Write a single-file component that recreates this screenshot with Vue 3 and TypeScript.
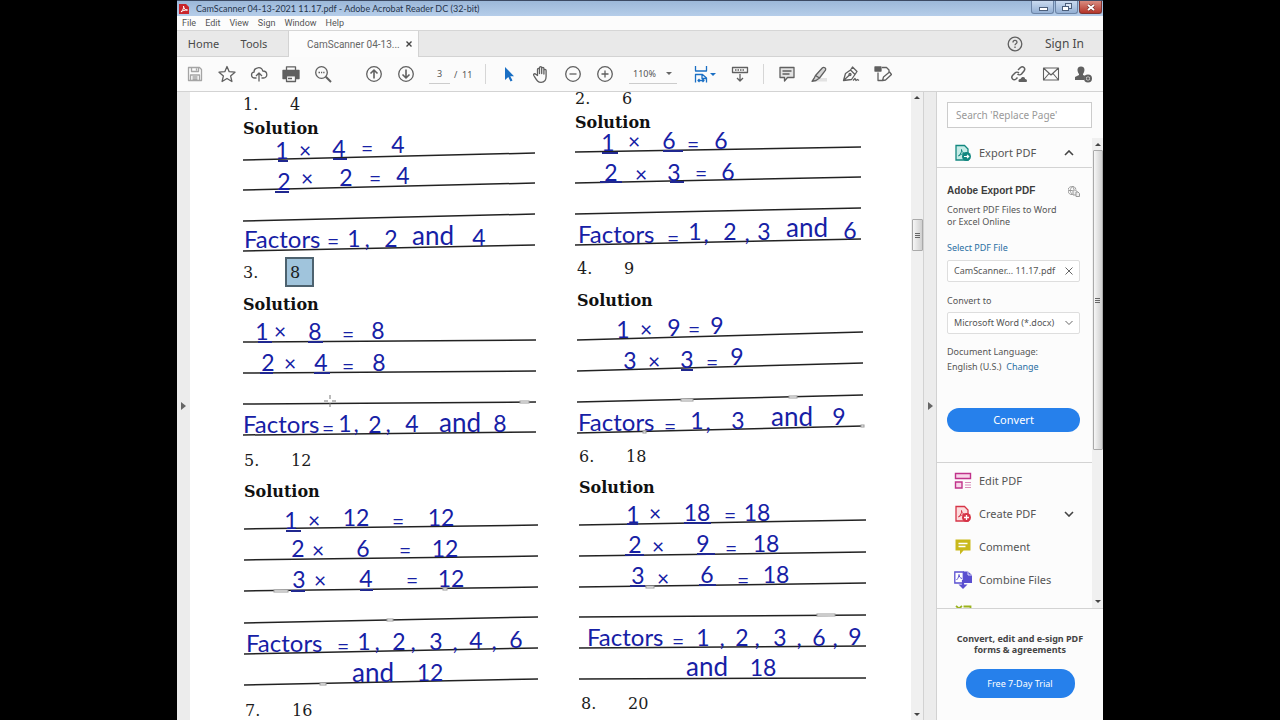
<script setup lang="ts">
import { ref } from 'vue'

type Kind = 'num' | 'op' | 'word' | 'and'
interface Ink { x: number; y: number; text: string; kind: Kind }
interface Problem {
  no: number
  value: string
  marked?: boolean
  box: [number, number, number, number]
  rules: [number, number][]
  under: [number, number, number][]
  gaps: [number, number, number][]
  ink: Ink[]
}

const n = (x: number, y: number, text: string): Ink => ({ x, y, text, kind: text === 'and' ? 'and' : 'num' })
const o = (x: number, y: number, text: string): Ink => ({ x, y: y + 6, text, kind: 'op' })
const w = (x: number, y: number, text: string): Ink => ({ x, y, text, kind: 'word' })

const left: Problem[] = [
  {
    no: 1, value: '4', box: [243, 141, 292, 120],
    rules: [[160, 153], [190, 183], [221, 214], [251, 245]],
    under: [[278, 288, 161], [333, 347, 159], [275, 289, 192]], gaps: [],
    ink: [
      n(282, 159, '1'), o(305, 152, '×'), n(339, 157, '4'), o(367, 150, '='), n(398, 153, '4'),
      n(284, 190, '2'), o(307, 180, '×'), n(346, 186, '2'), o(375, 180, '='), n(403, 184, '4'),
      w(244, 248, 'Factors'), o(333, 243, '='), n(354, 247, '1'), n(367, 247, ','), n(391, 247, '2'), n(433, 245, 'and'), n(479, 246, '4'),
    ],
  },
  {
    no: 3, value: '8', marked: true, box: [243, 318, 293, 132],
    rules: [[343, 341], [374, 372], [405, 403], [436, 433]],
    under: [[258, 272, 343], [308, 323, 343], [260, 273, 374], [314, 330, 374]], gaps: [[520, 9, 403]],
    ink: [
      n(262, 341, '1'), o(280, 334, '×'), n(315, 341, '8'), o(348, 337, '='), n(378, 340, '8'),
      n(268, 372, '2'), o(290, 366, '×'), n(321, 372, '4'), o(348, 369, '='), n(379, 372, '8'),
      w(243, 434, 'Factors'), o(328, 431, '='), n(345, 433, '1'), n(356, 433, ','), n(375, 434, '2'), n(388, 433, ','), n(412, 433, '4'), n(460, 433, 'and'), n(500, 433, '8'),
    ],
  },
  {
    no: 5, value: '12', box: [244, 505, 294, 195],
    rules: [[530, 526], [561, 557], [592, 588], [624, 618], [655, 649], [686, 680]],
    under: [[286, 301, 532], [291, 305, 592], [360, 373, 591]], gaps: [[274, 14, 592], [387, 6, 621], [443, 4, 590], [320, 6, 685]],
    ink: [
      n(291, 530, '1'), o(314, 523, '×'), n(356, 527, '12'), o(398, 524, '='), n(441, 527, '12'),
      n(298, 558, '2'), o(318, 553, '×'), n(363, 558, '6'), o(405, 553, '='), n(445, 558, '12'),
      n(299, 589, '3'), o(320, 583, '×'), n(366, 588, '4'), o(412, 583, '='), n(451, 588, '12'),
      w(246, 653, 'Factors'), o(343, 649, '='), n(364, 651, '1'), n(377, 651, ','), n(399, 651, '2'), n(413, 651, ','), n(436, 651, '3'), n(455, 651, ','), n(476, 650, '4'), n(494, 650, ','), n(516, 649, '6'),
      n(373, 683, 'and'), n(430, 682, '12'),
    ],
  },
  { no: 7, value: '16', box: [245, 720, 292, 0], rules: [], under: [], gaps: [], ink: [] },
]

const right: Problem[] = [
  {
    no: 2, value: '6', box: [575, 135, 286, 122],
    rules: [[152, 147], [183, 177], [214, 208], [245, 239]],
    under: [[602, 618, 153], [663, 683, 151], [600, 622, 182], [670, 684, 182]], gaps: [],
    ink: [
      n(608, 151, '1'), o(634, 143, '×'), n(669, 149, '6'), o(693, 146, '='), n(721, 149, '6'),
      n(611, 181, '2'), o(641, 176, '×'), n(674, 181, '3'), o(701, 175, '='), n(728, 180, '6'),
      w(578, 243, 'Factors'), o(673, 240, '='), n(695, 240, '1'), n(706, 242, ','), n(730, 240, '2'), n(747, 241, ','), n(764, 240, '3'), n(807, 237, 'and'), n(850, 239, '6'),
    ],
  },
  {
    no: 4, value: '9', box: [577, 313, 286, 132],
    rules: [[340, 332], [371, 363], [402, 395], [433, 426]],
    under: [[681, 693, 370]], gaps: [[681, 12, 400], [789, 8, 397], [643, 3, 432], [861, 3, 426]],
    ink: [
      n(623, 338, '1'), o(646, 331, '×'), n(674, 336, '9'), o(694, 331, '='), n(717, 334, '9'),
      n(630, 369, '3'), o(654, 363, '×'), n(687, 368, '3'), o(712, 364, '='), n(737, 365, '9'),
      w(578, 431, 'Factors'), o(670, 428, '='), n(697, 429, '1'), n(708, 430, ','), n(738, 429, '3'), n(792, 426, 'and'), n(839, 425, '9'),
    ],
  },
  {
    no: 6, value: '18', box: [579, 500, 287, 192],
    rules: [[525, 520], [556, 552], [587, 583], [617, 615], [648, 646], [679, 678]],
    under: [[627, 638, 524], [684, 711, 523], [625, 644, 555], [697, 715, 554], [630, 645, 586], [699, 716, 585]],
    gaps: [[646, 8, 587], [817, 18, 615]],
    ink: [
      n(633, 523, '1'), o(655, 515, '×'), n(697, 521, '18'), o(730, 517, '='), n(757, 521, '18'),
      n(635, 553, '2'), o(658, 548, '×'), n(703, 552, '9'), o(731, 550, '='), n(766, 552, '18'),
      n(638, 584, '3'), o(663, 580, '×'), n(707, 583, '6'), o(743, 582, '='), n(776, 583, '18'),
      w(587, 646, 'Factors'), o(678, 643, '='), n(703, 646, '1'), n(722, 646, ','), n(742, 646, '2'), n(757, 646, ','), n(780, 646, '3'), n(799, 646, ','), n(819, 646, '6'), n(835, 646, ','), n(855, 645, '9'),
      n(707, 676, 'and'), n(763, 676, '18'),
    ],
  },
  { no: 8, value: '20', box: [581, 720, 292, 0], rules: [], under: [], gaps: [], ink: [] },
]
const columns = [left, right]

const menus = ['File', 'Edit', 'View', 'Sign', 'Window', 'Help']
const page = ref('3')
const zoom = ref('110%')
const search = ref('')
const format = ref('Microsoft Word (*.docx)')
</script>

<template>
  <div class="stage">
    <main class="window">
      <header class="titlebar">
        <svg class="applogo" viewBox="0 0 10 10" aria-hidden="true">
          <path d="M0 0h7l3 3v7H0z" fill="#c9252b" /><path d="M2 8C4 6 5 4 4.500 2M4.500 2C5 5 6 6 8.500 6M2 8C3.500 6.500 6 6 8.500 6" fill="none" stroke="#fff" />
        </svg>
        <h1>CamScanner 04-13-2021 11.17.pdf - Adobe Acrobat Reader DC (32-bit)</h1>
        <div class="winbtns">
          <button aria-label="Minimize"><svg viewBox="0 0 22 11"><rect x="7.500" y="5.500" width="8" height="3" fill="#fff" stroke="#4c5f7b" /></svg></button>
          <button aria-label="Restore"><svg viewBox="0 0 22 11"><rect x="9.500" y="1.500" width="6" height="5" fill="#dce7f5" stroke="#4c5f7b" /><rect x="6.500" y="4.500" width="6" height="4" fill="#fff" stroke="#4c5f7b" /></svg></button>
          <button class="close" aria-label="Close"><svg viewBox="0 0 22 11"><path d="M8 3l6 5M14 3l-6 5" stroke="#6b2a25" stroke-width="3" /><path d="M8 3l6 5M14 3l-6 5" stroke="#fff" stroke-width="2" /></svg></button>
        </div>
      </header>

      <nav class="menubar"><button v-for="m in menus" :key="m">{{ m }}</button></nav>

      <div class="tabs">
        <button class="home">Home</button>
        <button class="tools">Tools</button>
        <div class="doc-tab"><span>CamScanner 04-13...</span><button aria-label="Close tab"><svg viewBox="0 0 6 6"><path d="M.5.5l5 5M5.500.5l-5 5" stroke="#444" stroke-width="1.400" /></svg></button></div>
        <button class="help" aria-label="Help"><svg class="ic" viewBox="0 0 18 18"><circle cx="9" cy="9" r="6.800" /><path d="M7 7.500c0-2.800 4-2.600 4-.2 0 1.500-2 1.500-2 3M9 11.500v1.400" /></svg></button>
        <button class="signin">Sign In</button>
      </div>

      <div class="toolbar">
        <button class="tb faint" aria-label="Save"><svg class="ic" viewBox="0 0 18 18"><path d="M2.500 2.500h11l2 2v11h-13zM5.500 2.500v4h7v-4M10.500 3.500v2M4.500 15.500v-5.500h9v5.500M6.500 12h5M6.500 14h5" /></svg></button>
        <button class="tb" aria-label="Star"><svg class="ic" viewBox="0 0 18 18"><path d="M9 1.500l2.200 5.200 5.800.5-4.400 3.700 1.300 5.600L9 13.500l-4.900 3 1.300-5.600L1 7.200l5.800-.5z" /></svg></button>
        <button class="tb" aria-label="Upload"><svg class="ic" viewBox="0 0 18 18"><path d="M6.500 13H4.800C.6 13 .6 7.500 4 7.200 4 2 11.500 1 12.800 6 18 6 18 13 13.500 13h-2M9 16.500v-8M6 11l3-3 3 3" /></svg></button>
        <button class="tb" aria-label="Print"><svg class="ic" viewBox="0 0 18 18"><path d="M4.500 5V1.800h9V5" /><path d="M1 5.500h16v8h-3v-3H4v3H1z" fill="#606060" /><path d="M4.500 10.500h9v6h-9zM6 13.500h4" /></svg></button>
        <button class="tb" aria-label="Search"><svg class="ic" viewBox="0 0 18 18"><circle cx="7.500" cy="7.500" r="5.800" /><path d="M11.800 11.800L17 17" stroke-width="2" /><path d="M4.500 7.500H6M7 7.500h1.200M9.200 7.500h1.300" /></svg></button>
        <button class="tb after" aria-label="Previous page"><svg class="ic" viewBox="0 0 18 18"><circle cx="9" cy="9" r="7.300" /><path d="M9 13.500V5M5.500 8.500L9 5l3.500 3.500" stroke-width="1.600" /></svg></button>
        <button class="tb" aria-label="Next page"><svg class="ic" viewBox="0 0 18 18"><circle cx="9" cy="9" r="7.300" /><path d="M9 4.500V13M5.500 9.500L9 13l3.500-3.500" stroke-width="1.600" /></svg></button>
        <input v-model="page" class="page" aria-label="Page number" /><span class="total">/&nbsp; 11</span>
        <i class="sep"></i>
        <button class="tb" aria-label="Select"><svg class="ic" viewBox="0 0 18 18"><path d="M5 2v13l3.300-3 2.200 4.500 2-1-2.200-4.300H14z" fill="#1a6fc4" stroke="none" /></svg></button>
        <button class="tb" aria-label="Hand"><svg class="ic" viewBox="0 0 18 18"><path d="M5.500 10.500V4.500c0-1.500 2-1.500 2 0V8.500 2.800c0-1.500 2.200-1.500 2.200 0v5.700-5c0-1.500 2.200-1.500 2.200 0v5.500-3.500c0-1.500 2.200-1.500 2.200 0v6c0 4-2 5.800-5 5.800-3.500 0-4.500-2.300-7.300-6.800-.8-1.500 1-2.300 2-1.200z" /></svg></button>
        <button class="tb" aria-label="Zoom out"><svg class="ic" viewBox="0 0 18 18"><circle cx="9" cy="9" r="7.300" /><path d="M5.500 9h7" /></svg></button>
        <button class="tb" aria-label="Zoom in"><svg class="ic" viewBox="0 0 18 18"><circle cx="9" cy="9" r="7.300" /><path d="M5.500 9h7M9 5.500v7" /></svg></button>
        <label class="zoom"><select v-model="zoom" aria-label="Zoom level"><option>110%</option></select><i class="caret"></i></label>
        <button class="tb fit" aria-label="Fit width"><svg class="ic" viewBox="0 0 18 18"><path d="M3.500 1v5h11V1M3.500 17.500V9.500h7l4 3.500v4.500M10 9.500v4h4.500M6 15.500h6M7.500 14L6 15.500 7.500 17M10.500 14l1.500 1.500-1.500 1.500" /></svg><i class="caret"></i></button>
        <button class="tb" aria-label="Read mode"><svg class="ic" viewBox="0 0 18 18"><path d="M1.500 2.500h15v5h-15z" /><path d="M4 5h10" stroke-dasharray="1.500 1" /><path d="M9 9v7M6 13l3 3 3-3" /></svg></button>
        <i class="sep"></i>
        <button class="tb" aria-label="Comment"><svg class="ic" viewBox="0 0 18 18"><path d="M2 2.500h14v10h-6.500L6.500 16v-3.500H2z" fill="#e3e3e3" /><path d="M4.500 6h9M4.500 9h7" /></svg></button>
        <button class="tb" aria-label="Highlight"><svg class="ic" viewBox="0 0 18 18"><path d="M8 13h9v3.500H4z" fill="#e2e2e2" stroke="none" /><path d="M5.500 10.500L12.500 2.800c1.500-1.300 4 .6 3 2.400L9.500 13zM5.500 10.500L4 13.500l-2 2.800 4-.8 3.500-2.500" fill="#d5d5d5" /></svg></button>
        <button class="tb" aria-label="Sign"><svg class="ic" viewBox="0 0 18 18"><path d="M1.500 15.500l2-7 5-3.500 4.500 4.500-3.500 5zM1.500 15.500L7.500 10M8.500 5l2-3 4.500 4.500-2 3M11 15.500l2-2 1 2 1.500-1 1.500 1" /><circle cx="8" cy="9.500" r="1" /></svg></button>
        <button class="tb" aria-label="Stamp"><svg class="ic" viewBox="0 0 18 18"><path d="M1 2h6v4H1z" fill="#606060" /><path d="M8 2.500h4.500L15 5v2M4 7.500v8h5M8.500 15.500l1-3.500 6-5 2 2.500-6 5.500z" /></svg></button>
        <span class="grow"></span>
        <button class="tb" aria-label="Share link"><svg class="ic" viewBox="0 0 18 18"><path d="M8 5l2.500-2.500c2.500-2 5.500 1 3.500 3.500L11.500 9c-1 1-3 1-4 0M9 8c-1-1-3-1-4 0L2.500 10.500C.5 13 3.500 16 6 14l1.500-1.500" stroke-width="1.500" /><path d="M9 17c-1.500-2.500 1-3.500 1.500-3 1-3 5-2.500 4.500 0 2 0 2.500 2 1.500 3z" fill="#606060" stroke="none" /></svg></button>
        <button class="tb" aria-label="Email"><svg class="ic" viewBox="0 0 18 18"><path d="M1.500 3h15v12h-15zM1.500 3L9 10l7.500-7M1.500 15L7 8.500M16.500 15L11 8.500" stroke-width="1.100" /></svg></button>
        <button class="tb" aria-label="Share with others"><svg class="ic" viewBox="0 0 18 18"><path d="M7 1.500c4.500 0 4 5 2 7.500v1l2.500 1c-1 1-1.500 2.500-1 4H1v-3l4-2V9C3 6.500 2.500 1.500 7 1.500z" fill="#606060" stroke="none" /><circle cx="14" cy="13.500" r="3" stroke-width="2" /><path d="M12.500 13.500h3M14 12v3" /></svg></button>
      </div>

      <div class="content">
        <button class="rail left-rail" aria-label="Open navigation pane"><svg viewBox="0 0 5 8"><path d="M0 0l5 4-5 4z" /></svg></button>
        <article class="sheet">
          <div v-for="(col, c) in columns" :key="c" class="column">
            <section v-for="p in col" :key="p.no" class="problem">
              <div class="head"><span class="no">{{ p.no }}.</span><span :class="{ marked: p.marked }">{{ p.value }}</span></div>
              <template v-if="p.rules.length">
                <h2>Solution</h2>
                <svg class="work" :width="p.box[2]" :height="p.box[3]" :viewBox="p.box.join(' ')">
                  <line v-for="(r, i) in p.rules" :key="i" class="rule" :x1="p.box[0]" :x2="p.box[0] + p.box[2]" :y1="r[0]" :y2="r[1]" />
                  <line v-for="(u, i) in p.under" :key="'u' + i" class="under" :x1="u[0]" :x2="u[1]" :y1="u[2]" :y2="u[2]" />
                  <rect v-for="(g, i) in p.gaps" :key="'g' + i" class="blip" :x="g[0]" :y="g[2] - 1" :width="g[1]" height="2" />
                  <text v-for="(t, i) in p.ink" :key="'t' + i" :x="t.x" :y="t.y" :class="t.kind">{{ t.text }}</text>
                  <path v-if="p.marked" class="cross" d="M324 402h4M332 402h4M330 396v4M330 404v4" />
                </svg>
              </template>
            </section>
          </div>
        </article>
        <div class="scroll doc-scroll"><i class="up"></i><b><em></em></b><i class="down"></i></div>
        <button class="rail right-rail" aria-label="Collapse tools pane"><svg viewBox="0 0 5 8"><path d="M0 0l5 4-5 4z" /></svg></button>

        <aside class="panel">
          <div class="search"><input v-model="search" placeholder="Search 'Replace Page'" aria-label="Search tools" /></div>
          <div class="scroller">
            <div class="list">
              <button class="tool first">
                <svg class="ti" viewBox="0 0 18 18"><path d="M2 1.500h8.500L14 5v11H2z" fill="#c5ebe6" stroke="#12877f" stroke-width="1.300" /><path d="M4.500 12c2-2 3.500-4 3-6.500M7.500 5.500c0 2.500 2 4 4.500 4M4.500 12c2-1.500 4-2.500 7.500-2.500" fill="none" stroke="#12877f" /><circle cx="12.500" cy="12.500" r="4.500" fill="#12877f" /><path d="M10 12.500h4.500M13 10.800l1.700 1.700-1.700 1.700" fill="none" stroke="#fff" stroke-width="1.200" /></svg>
                <span>Export PDF</span><svg class="chev" viewBox="0 0 10 6"><path d="M1 5l4-4 4 4" /></svg>
              </button>
              <div class="export">
                <div class="title"><h3>Adobe Export PDF</h3><svg viewBox="0 0 12 11"><path d="M8 3.500A4 4 0 1 0 4.500 8.500M.5 4.500h4M4.500.5c-3 3-3 5 0 8M4.500.5L6 3" /><path d="M5 4h2.500L9 5.500V9H5z" fill="#eee" /><path d="M8 6h2l1.500 1.500v3H8z" fill="#eee" /></svg></div>
                <p>Convert PDF Files to Word<br />or Excel Online</p>
                <a class="pick" href="#">Select PDF File</a>
                <div class="file"><span>CamScanner... 11.17.pdf</span><button aria-label="Remove file"><svg viewBox="0 0 8 8"><path d="M.5.5l7 7M7.500.5l-7 7" /></svg></button></div>
                <label for="format">Convert to</label>
                <div class="format"><select id="format" v-model="format"><option>Microsoft Word (*.docx)</option></select><svg viewBox="0 0 8 6"><path d="M.5 1L4 4.500 7.500 1" /></svg></div>
                <p class="lang">Document Language:<br />English (U.S.) &nbsp;<a href="#">Change</a></p>
                <button class="primary">Convert</button>
              </div>
              <button class="tool">
                <svg class="ti" viewBox="0 0 18 18"><path d="M1.500 1.500h15v5h-15zM1.500 10h6.500v6h-6.500z" fill="#f8d5e8" stroke="#c0328a" stroke-width="1.400" /><path d="M11 10.500h6M11 13h6M11 15.500h6" stroke="#d98cba" /></svg>
                <span>Edit PDF</span>
              </button>
              <button class="tool">
                <svg class="ti" viewBox="0 0 18 18"><path d="M2 1.500h8.500L14 5v11H2z" fill="#fbdcdd" stroke="#d63447" stroke-width="1.300" /><path d="M4.500 12c2-2 3.500-4 3-6.500M7.500 5.500c0 2.500 2 4 4.500 4M4.500 12c2-1.500 4-2.500 7.500-2.500" fill="none" stroke="#d63447" /><circle cx="12.500" cy="12.500" r="4.500" fill="#d63447" /><path d="M10 12.500h5M12.500 10v5" stroke="#fff" stroke-width="1.300" /></svg>
                <span>Create PDF</span><svg class="chev" viewBox="0 0 10 6"><path d="M1 1l4 4 4-4" /></svg>
              </button>
              <button class="tool">
                <svg class="ti" viewBox="0 0 18 18"><path d="M1.500 1.500h15v11H9.500L6 16.500v-4H1.500z" fill="#c9b91c" /><path d="M4.500 5.500h9M4.500 8.500h7" stroke="#fff" stroke-width="1.400" /></svg>
                <span>Comment</span>
              </button>
              <button class="tool">
                <svg class="ti" viewBox="0 0 18 18"><path d="M9 .5h5l4 3.500v8H9z" fill="#5a4fd0" /><path d="M14 .5V4h4" stroke="#fff" fill="none" stroke-width=".8" /><path d="M.8 1h8.500v11H.8z" fill="#fff" stroke="#5a4fd0" stroke-width="1.300" /><path d="M2.500 9c2-2 2.500-4 2.500-5.500 0 2 1 3.500 3 4" fill="none" stroke="#5a4fd0" /><path d="M9 9v6" stroke="#5a4fd0" stroke-width="2.200" /><path d="M4.500 13.500h9L9 18z" fill="#5a4fd0" /></svg>
                <span>Combine Files</span>
              </button>
              <button class="tool" aria-label="Organize Pages">
                <svg class="ti" viewBox="0 0 18 18"><path d="M2 2l3 2.500L8 2M9.500 2.500h7v13h-15V8" fill="none" stroke="#9bb31d" stroke-width="1.800" /></svg>
              </button>
            </div>
            <div class="scroll panel-scroll"><i class="up"></i><b><em></em></b><i class="down"></i></div>
          </div>
          <footer><strong>Convert, edit and e-sign PDF<br />forms &amp; agreements</strong><button class="primary">Free 7-Day Trial</button></footer>
        </aside>
      </div>
    </main>
  </div>
</template>

<style>
body { background: #000; overflow: hidden; }
</style>

<style scoped>
* { box-sizing: border-box; }
.stage { height: 100vh; padding: 0 177px; background: #000; font-family: "Noto Sans", "Open Sans", sans-serif; color: #555; }
.window { height: 100%; display: flex; flex-direction: column; overflow: hidden; background: #fcfcfc; }
button { font: inherit; color: inherit; background: none; border: 0; padding: 0; display: flex; align-items: center; justify-content: center; }
h1, h2, h3, p { margin: 0; font-weight: 400; }
a { color: #2b6fa3; text-decoration: none; }
svg { display: block; flex: none; }

.titlebar { flex: 0 0 16px; display: flex; align-items: center; padding-left: 2px; border-top: 1px solid #3c4a63; background: linear-gradient(#9cb8d9, #b5cde9); }
.applogo { width: 10px; height: 10px; }
h1 { flex: 1; margin-left: 7px; font-family: Lato, sans-serif; font-size: 9px; line-height: 14px; color: #26354c; white-space: nowrap; }
.winbtns { display: flex; gap: 1px; align-self: flex-start; padding-right: 1px; }
.winbtns button { width: 23px; height: 13px; border: 1px solid #6c84a6; border-top: 0; border-radius: 0 0 3px 3px; background: linear-gradient(#c9daef, #93afd3); }
.winbtns .close { background: linear-gradient(#d98c80, #b4352a); border-color: #7c3431; }
.winbtns svg { width: 22px; height: 11px; }

.menubar { flex: 0 0 14px; display: flex; gap: 9px; padding-left: 5px; font-family: Roboto, sans-serif; font-size: 9px; line-height: 14px; }
.tabs { flex: 0 0 27px; display: flex; align-items: stretch; background: #e9e9e9; border-top: 1px solid #d6d6d6; border-bottom: 1px solid #d3d3d3; font-size: 11px; color: #4a4a4a; padding-right: 19px; }
.home { width: 53px; }
.tools { width: 48px; }
.doc-tab { width: 131px; margin: 0 auto -1px 10px; padding: 0 6px 0 18px; display: flex; align-items: center; justify-content: space-between; background: #fcfcfc; border: solid #d3d3d3; border-width: 0 1px; font-family: Roboto, sans-serif; font-size: 10px; color: #666; white-space: nowrap; }
.doc-tab svg { width: 6px; height: 6px; }
.help { width: 18px; margin-right: 21px; }
.signin { font-size: 12px; }

.ic { width: 18px; height: 18px; fill: none; stroke: #606060; stroke-width: 1.300; stroke-linejoin: round; }
.toolbar { flex: 0 0 35px; display: flex; align-items: center; padding: 0 4px 0 2px; border-bottom: 1px solid #d3d3d3; background: #fbfbfb; font-size: 9px; }
.tb { width: 32px; height: 28px; flex: none; }
.faint .ic { stroke: #a5a5a5; }
.after { margin-left: 19px; }
.page { width: 21px; height: 20px; margin: 0 4px 0 7px; padding: 0; border: 0; border-bottom: 1px solid #ccc; background: none; text-align: center; font: inherit; color: inherit; }
.sep { width: 1px; height: 20px; margin: 0 7px; background: #d6d6d6; flex: none; }
.total { width: 24px; white-space: nowrap; }
.zoom { width: 48px; margin-left: 8px; height: 20px; border-bottom: 1px solid #ccc; display: flex; align-items: center; justify-content: space-between; padding-right: 5px; }
.zoom select, .format select { appearance: none; border: 0; background: none; font: inherit; color: inherit; padding: 0 0 0 4px; flex: 1; min-width: 0; }
.caret { border: 3px solid transparent; border-top-color: #666; border-bottom: 0; }
.fit { margin-left: 11px; }
.fit .ic { stroke: #1a6fc4; }
.fit .caret { border-top-color: #1a6fc4; }
.toolbar .fit + .tb { margin-left: 4px; }
.grow { flex: 1; }

.content { flex: 1; min-height: 0; display: flex; }
.rail { flex: none; background: #ececec; }
.rail svg { width: 5px; height: 8px; fill: #666; }
.left-rail { width: 13px; }
.right-rail { width: 14px; border: solid #d2d2d2; border-width: 0 1px; }
.sheet { flex: 1; min-width: 0; overflow: hidden; display: grid; grid-template-columns: 332px 1fr; padding: 1px 0 0 53px; background: #fff; font-family: "DejaVu Serif", serif; font-size: 16px; line-height: 24px; color: #1c1c1c; }
.head { display: flex; height: 24px; }
.column + .column .problem:first-child .head { height: 18px; line-height: 12px; }
.no { width: 47px; }
.column:first-child .problem:nth-child(3) { margin-left: 1px; }
.column:first-child .problem:nth-child(4),
.column + .column .problem:nth-child(2) { margin-left: 2px; }
.column + .column .problem:nth-child(3) { margin-left: 4px; }
.column + .column .problem:nth-child(4) { margin-left: 6px; }
.marked { width: 29px; height: 30px; margin: -4px 0 -2px -5px; padding-left: 3px; line-height: 28px; border: 2px solid #4d626f; background: #a0c4dc; }
h2 { margin-top: 7px; font-size: 16px; font-weight: 700; line-height: 24px; color: #111; }
.problem:first-child h2 { margin-top: 0; }
.problem:nth-child(2) h2 { margin-top: 8px; }
.work { overflow: visible; }
.rule { stroke: #222; stroke-width: 1.500; }
.under { stroke: #20288f; stroke-width: 2; }
.blip { fill: #fff; stroke: #999; stroke-width: 1; }
.cross { stroke: #777; }
.work text { font-family: Lato, "Open Sans", sans-serif; font-size: 23px; fill: #1620a5; text-anchor: middle; }
.work .op { font-size: 21px; }
.work .and { font-size: 26px; }
.work .word { font-size: 24px; text-anchor: start; }

.scroll { display: flex; flex-direction: column; align-items: center; flex: none; background: #f0f0f0; }
.scroll i { border: 3px solid transparent; }
.scroll .up { border-bottom-color: #444; border-top: 0; }
.scroll .down { border-top-color: #444; border-bottom: 0; margin-top: auto; }
.scroll b { display: flex; align-items: center; justify-content: center; border: 1px solid #aaa; border-radius: 1px; background: linear-gradient(90deg, #f6f6f6, #cfcfcf); }
.scroll em { width: 5px; height: 5px; background: repeating-linear-gradient(#666 0 1px, transparent 1px 2px); }
.doc-scroll { width: 12px; padding: 4px 0; }
.doc-scroll b { width: 11px; height: 32px; margin-top: 120px; }

.panel { flex: 0 0 166px; display: flex; flex-direction: column; background: #fcfcfc; }
.search { padding: 10px 11px 10px 10px; }
.search input { width: 100%; height: 26px; padding: 0 8px; border: 1px solid #ccc; background: #fff; font: inherit; font-size: 10px; }
.search input::placeholder { color: #999; opacity: 1; }
.scroller { flex: 1; min-height: 0; display: flex; border-bottom: 1px solid #d3d3d3; }
.list { flex: 1; overflow: hidden; }
.tool { width: 100%; height: 33px; padding: 0 18px 0 17px; justify-content: flex-start; font-size: 11px; white-space: nowrap; }
.first { height: 30px; border-bottom: 1px solid #d3d3d3; }
.ti { width: 18px; height: 18px; }
.tool span { margin-left: 7px; flex: 1; text-align: left; }
.chev { width: 10px; height: 6px; fill: none; stroke: #444; stroke-width: 1.600; }
.export { padding: 16px 12px 30px 10px; margin-bottom: 1px; border-bottom: 1px solid #d3d3d3; font-size: 9px; line-height: 12px; }
.title { display: flex; align-items: center; justify-content: space-between; }
h3 { font: 700 10px/14px "Liberation Sans", Arial, sans-serif; color: #3c3c3c; }
.title svg { width: 12px; height: 11px; fill: none; stroke: #999; }
.export p { margin-top: 6px; white-space: nowrap; }
.pick { display: block; margin: 14px 0 6px; }
.file, .format { display: flex; align-items: center; justify-content: space-between; height: 22px; padding: 0 6px; border: 1px solid #dedede; border-radius: 2px; background: #fff; white-space: nowrap; }
.file svg, .format svg { width: 8px; height: 8px; fill: none; stroke: #666; }
.export label { display: block; margin: 13px 0 5px; }
.format select { padding: 0; }
.export .lang { margin-top: 10px; line-height: 15px; }
.primary { width: 100%; height: 24px; border-radius: 14px; background: #2680eb; color: #fff; }
.export .primary { margin-top: 34px; font-size: 11px; }
.panel-scroll { width: 11px; padding: 5px 0; }
.panel-scroll b { width: 10px; height: 300px; margin-top: 4px; }
footer { flex: 0 0 111px; display: flex; flex-direction: column; align-items: center; padding-top: 24px; text-align: center; font-size: 9px; line-height: 11px; }
footer strong { color: #444; }
footer .primary { width: 109px; height: 29px; margin-top: 14px; }
</style>
